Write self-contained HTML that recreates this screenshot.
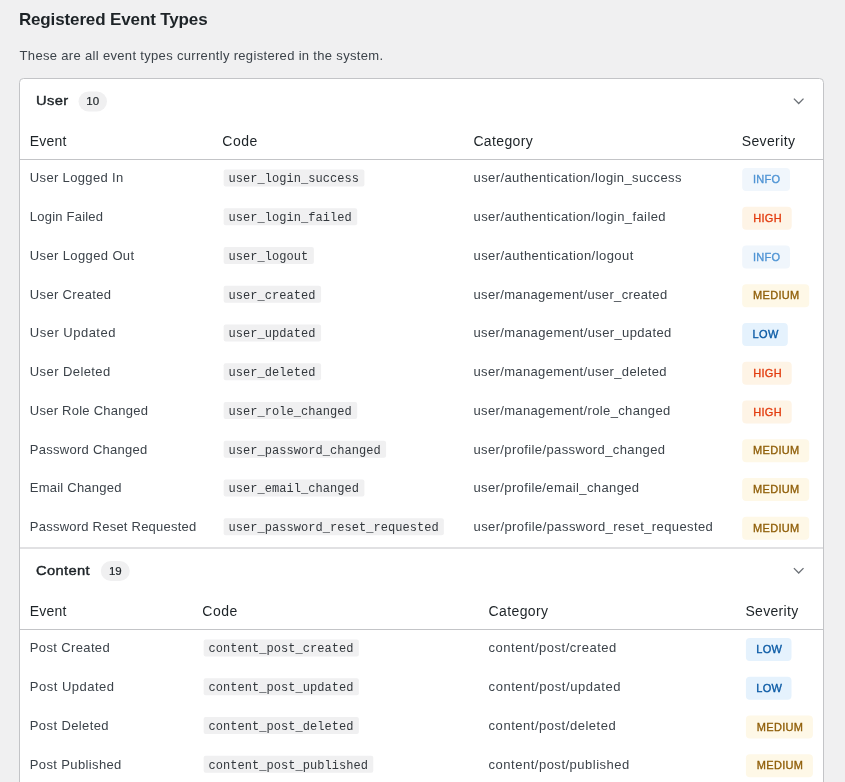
<!DOCTYPE html>
<html lang="en">
<head>
<meta charset="utf-8">
<title>Registered Event Types</title>
<style>
html,body{margin:0;padding:0;}
html{background:#f0f0f1;}
body{width:845px;height:782px;overflow:hidden;background:#f0f0f1;color:#3c434a;font-family:"Liberation Sans",sans-serif;font-size:13px;position:relative;}
h2,p,div,span,code{position:absolute;margin:0;white-space:nowrap;}
h2{left:18.9px;top:10px;font-size:17px;line-height:20px;font-weight:700;color:#1d2327;}
.desc{left:19.6px;top:48px;font-size:13px;line-height:16px;color:#3c434a;}
.st{font-size:13.5px;line-height:20px;height:20px;font-weight:400;-webkit-text-stroke:0.42px #1d2327;color:#1d2327;transform:scaleX(1.09);transform-origin:0 50%;}
.sb{height:20px;-webkit-text-stroke:0.2px #1d2327;color:#1d2327;font-size:11.5px;line-height:20px;text-align:center;}
.th{font-size:14px;line-height:20px;height:20px;color:#1d2327;}
.td{font-size:13px;line-height:20px;height:20px;color:#3c434a;}
code{font-family:"Liberation Mono",monospace;font-size:12px;line-height:18px;height:18px;color:#32373c;}
.sv{font-size:11px;font-weight:400;-webkit-text-stroke:0.35px currentColor;line-height:20px;height:20px;text-align:center;}
.info{color:#4f94d4;}
.high{color:#e23d10;}
.med{color:#8f5e08;}
.low{color:#0a5aa5;}
svg{position:absolute;}
</style>
</head>
<body>
<svg width="845" height="782" viewBox="0 0 845 782" style="left:0;top:0">
<rect x="19.5" y="78.5" width="804" height="720" rx="4" fill="#fff" stroke="#c3c4c7"/>
<rect x="78.5" y="91.50" width="28.5" height="20" rx="10" fill="#f0f0f1"/>
<path d="M793.9 98.60 L798.7 103.50 L803.5 98.60" fill="none" stroke="#6c7177" stroke-width="1.35"/>
<rect x="20" y="159.00" width="803" height="1" fill="#c3c4c7"/>
<rect x="223.65" y="169.60" width="140.76" height="17" rx="2" fill="#f0f0f1"/>
<rect x="742.20" y="168.00" width="47.8" height="22.9" rx="4" fill="#f0f6fc"/>
<rect x="223.65" y="208.35" width="133.54" height="17" rx="2" fill="#f0f0f1"/>
<rect x="742.20" y="206.75" width="49.5" height="22.9" rx="4" fill="#fef4e6"/>
<rect x="223.65" y="247.10" width="90.22" height="17" rx="2" fill="#f0f0f1"/>
<rect x="742.20" y="245.50" width="47.8" height="22.9" rx="4" fill="#f0f6fc"/>
<rect x="223.65" y="285.85" width="97.44" height="17" rx="2" fill="#f0f0f1"/>
<rect x="742.20" y="284.25" width="67.0" height="22.9" rx="4" fill="#fef8e7"/>
<rect x="223.65" y="324.60" width="97.44" height="17" rx="2" fill="#f0f0f1"/>
<rect x="742.20" y="323.00" width="45.6" height="22.9" rx="4" fill="#e5f2fd"/>
<rect x="223.65" y="363.35" width="97.44" height="17" rx="2" fill="#f0f0f1"/>
<rect x="742.20" y="361.75" width="49.5" height="22.9" rx="4" fill="#fef4e6"/>
<rect x="223.65" y="402.10" width="133.54" height="17" rx="2" fill="#f0f0f1"/>
<rect x="742.20" y="400.50" width="49.5" height="22.9" rx="4" fill="#fef4e6"/>
<rect x="223.65" y="440.85" width="162.42" height="17" rx="2" fill="#f0f0f1"/>
<rect x="742.20" y="439.25" width="67.0" height="22.9" rx="4" fill="#fef8e7"/>
<rect x="223.65" y="479.60" width="140.76" height="17" rx="2" fill="#f0f0f1"/>
<rect x="742.20" y="478.00" width="67.0" height="22.9" rx="4" fill="#fef8e7"/>
<rect x="223.65" y="518.35" width="220.18" height="17" rx="2" fill="#f0f0f1"/>
<rect x="742.20" y="516.75" width="67.0" height="22.9" rx="4" fill="#fef8e7"/>
<rect x="20" y="547.5" width="803.5" height="1" fill="#c3c4c7"/>
<rect x="100.8" y="561.00" width="29.0" height="20" rx="10" fill="#f0f0f1"/>
<path d="M793.9 568.10 L798.7 573.00 L803.5 568.10" fill="none" stroke="#6c7177" stroke-width="1.35"/>
<rect x="20" y="629.00" width="803" height="1" fill="#c3c4c7"/>
<rect x="203.65" y="639.60" width="155.20" height="17" rx="2" fill="#f0f0f1"/>
<rect x="745.90" y="638.00" width="45.6" height="22.9" rx="4" fill="#e5f2fd"/>
<rect x="203.65" y="678.35" width="155.20" height="17" rx="2" fill="#f0f0f1"/>
<rect x="745.90" y="676.75" width="45.6" height="22.9" rx="4" fill="#e5f2fd"/>
<rect x="203.65" y="717.10" width="155.20" height="17" rx="2" fill="#f0f0f1"/>
<rect x="745.90" y="715.50" width="67.0" height="22.9" rx="4" fill="#fef8e7"/>
<rect x="203.65" y="755.85" width="169.64" height="17" rx="2" fill="#f0f0f1"/>
<rect x="745.90" y="754.25" width="67.0" height="22.9" rx="4" fill="#fef8e7"/>
</svg>
<div id="tx" style="left:0;top:0;width:845px;height:782px;will-change:transform">
<h2 id="h2" style="letter-spacing:-0.131px;">Registered Event Types</h2>
<p class="desc" id="desc" style="letter-spacing:0.326px;">These are all event types currently registered in the system.</p>
<span class="st" id="at" style="left:36.0px;top:91.10px;letter-spacing:0.300px;">User</span>
<span class="sb" id="ab" style="left:78.5px;top:91.25px;width:28.5px;">10</span>
<span class="th" id="ah0" style="left:29.7px;top:131.15px;letter-spacing:0.212px;">Event</span>
<span class="th" id="ah1" style="left:222.3px;top:131.15px;letter-spacing:0.543px;">Code</span>
<span class="th" id="ah2" style="left:473.4px;top:131.15px;letter-spacing:0.357px;">Category</span>
<span class="th" id="ah3" style="left:741.7px;top:131.15px;letter-spacing:0.380px;">Severity</span>
<span class="td" id="ae0" style="left:29.8px;top:168.45px;letter-spacing:0.349px;">User Logged In</span>
<code id="ac0" style="left:228.5px;top:170.30px;letter-spacing:0.050px;">user_login_success</code>
<span class="td" id="ag0" style="left:473.5px;top:168.45px;letter-spacing:0.401px;">user/authentication/login_success</span>
<span class="sv info" id="as0" style="left:742.80px;width:47.8px;top:169.10px;letter-spacing:0.300px;">INFO</span>
<span class="td" id="ae1" style="left:29.8px;top:207.20px;letter-spacing:0.221px;">Login Failed</span>
<code id="ac1" style="left:228.5px;top:209.05px;letter-spacing:0.050px;">user_login_failed</code>
<span class="td" id="ag1" style="left:473.5px;top:207.20px;letter-spacing:0.414px;">user/authentication/login_failed</span>
<span class="sv high" id="as1" style="left:742.80px;width:49.5px;top:207.85px;letter-spacing:0.300px;">HIGH</span>
<span class="td" id="ae2" style="left:29.8px;top:245.95px;letter-spacing:0.378px;">User Logged Out</span>
<code id="ac2" style="left:228.5px;top:247.80px;letter-spacing:0.050px;">user_logout</code>
<span class="td" id="ag2" style="left:473.5px;top:245.95px;letter-spacing:0.435px;">user/authentication/logout</span>
<span class="sv info" id="as2" style="left:742.80px;width:47.8px;top:246.60px;letter-spacing:0.300px;">INFO</span>
<span class="td" id="ae3" style="left:29.8px;top:284.70px;letter-spacing:0.353px;">User Created</span>
<code id="ac3" style="left:228.5px;top:286.55px;letter-spacing:0.050px;">user_created</code>
<span class="td" id="ag3" style="left:473.5px;top:284.70px;letter-spacing:0.346px;">user/management/user_created</span>
<span class="sv med" id="as3" style="left:742.80px;width:67.0px;top:285.35px;letter-spacing:0.300px;">MEDIUM</span>
<span class="td" id="ae4" style="left:29.8px;top:323.45px;letter-spacing:0.491px;">User Updated</span>
<code id="ac4" style="left:228.5px;top:325.30px;letter-spacing:0.050px;">user_updated</code>
<span class="td" id="ag4" style="left:473.5px;top:323.45px;letter-spacing:0.364px;">user/management/user_updated</span>
<span class="sv low" id="as4" style="left:742.80px;width:45.6px;top:324.10px;letter-spacing:0.300px;">LOW</span>
<span class="td" id="ae5" style="left:29.8px;top:362.20px;letter-spacing:0.417px;">User Deleted</span>
<code id="ac5" style="left:228.5px;top:364.05px;letter-spacing:0.050px;">user_deleted</code>
<span class="td" id="ag5" style="left:473.5px;top:362.20px;letter-spacing:0.353px;">user/management/user_deleted</span>
<span class="sv high" id="as5" style="left:742.80px;width:49.5px;top:362.85px;letter-spacing:0.300px;">HIGH</span>
<span class="td" id="ae6" style="left:29.8px;top:400.95px;letter-spacing:0.248px;">User Role Changed</span>
<code id="ac6" style="left:228.5px;top:402.80px;letter-spacing:0.050px;">user_role_changed</code>
<span class="td" id="ag6" style="left:473.5px;top:400.95px;letter-spacing:0.353px;">user/management/role_changed</span>
<span class="sv high" id="as6" style="left:742.80px;width:49.5px;top:401.60px;letter-spacing:0.300px;">HIGH</span>
<span class="td" id="ae7" style="left:29.8px;top:439.70px;letter-spacing:0.266px;">Password Changed</span>
<code id="ac7" style="left:228.5px;top:441.55px;letter-spacing:0.050px;">user_password_changed</code>
<span class="td" id="ag7" style="left:473.5px;top:439.70px;letter-spacing:0.387px;">user/profile/password_changed</span>
<span class="sv med" id="as7" style="left:742.80px;width:67.0px;top:440.35px;letter-spacing:0.300px;">MEDIUM</span>
<span class="td" id="ae8" style="left:29.8px;top:478.45px;letter-spacing:0.229px;">Email Changed</span>
<code id="ac8" style="left:228.5px;top:480.30px;letter-spacing:0.050px;">user_email_changed</code>
<span class="td" id="ag8" style="left:473.5px;top:478.45px;letter-spacing:0.380px;">user/profile/email_changed</span>
<span class="sv med" id="as8" style="left:742.80px;width:67.0px;top:479.10px;letter-spacing:0.300px;">MEDIUM</span>
<span class="td" id="ae9" style="left:29.8px;top:517.20px;letter-spacing:0.232px;">Password Reset Requested</span>
<code id="ac9" style="left:228.5px;top:519.05px;letter-spacing:0.050px;">user_password_reset_requested</code>
<span class="td" id="ag9" style="left:473.5px;top:517.20px;letter-spacing:0.406px;">user/profile/password_reset_requested</span>
<span class="sv med" id="as9" style="left:742.80px;width:67.0px;top:517.85px;letter-spacing:0.300px;">MEDIUM</span>
<span class="st" id="bt" style="left:36.0px;top:560.60px;letter-spacing:0.300px;">Content</span>
<span class="sb" id="bb" style="left:100.8px;top:560.75px;width:29.0px;">19</span>
<span class="th" id="bh0" style="left:29.7px;top:601.15px;letter-spacing:0.212px;">Event</span>
<span class="th" id="bh1" style="left:202.3px;top:601.15px;letter-spacing:0.543px;">Code</span>
<span class="th" id="bh2" style="left:488.5px;top:601.15px;letter-spacing:0.390px;">Category</span>
<span class="th" id="bh3" style="left:745.4px;top:601.15px;letter-spacing:0.329px;">Severity</span>
<span class="td" id="be0" style="left:29.8px;top:638.45px;letter-spacing:0.365px;">Post Created</span>
<code id="bc0" style="left:208.5px;top:640.30px;letter-spacing:0.050px;">content_post_created</code>
<span class="td" id="bg0" style="left:488.6px;top:638.45px;letter-spacing:0.523px;">content/post/created</span>
<span class="sv low" id="bs0" style="left:746.50px;width:45.6px;top:639.10px;letter-spacing:0.300px;">LOW</span>
<span class="td" id="be1" style="left:29.8px;top:677.20px;letter-spacing:0.500px;">Post Updated</span>
<code id="bc1" style="left:208.5px;top:679.05px;letter-spacing:0.050px;">content_post_updated</code>
<span class="td" id="bg1" style="left:488.6px;top:677.20px;letter-spacing:0.549px;">content/post/updated</span>
<span class="sv low" id="bs1" style="left:746.50px;width:45.6px;top:677.85px;letter-spacing:0.300px;">LOW</span>
<span class="td" id="be2" style="left:29.8px;top:715.95px;letter-spacing:0.394px;">Post Deleted</span>
<code id="bc2" style="left:208.5px;top:717.80px;letter-spacing:0.050px;">content_post_deleted</code>
<span class="td" id="bg2" style="left:488.6px;top:715.95px;letter-spacing:0.527px;">content/post/deleted</span>
<span class="sv med" id="bs2" style="left:746.50px;width:67.0px;top:716.60px;letter-spacing:0.300px;">MEDIUM</span>
<span class="td" id="be3" style="left:29.8px;top:754.70px;letter-spacing:0.370px;">Post Published</span>
<code id="bc3" style="left:208.5px;top:756.55px;letter-spacing:0.050px;">content_post_published</code>
<span class="td" id="bg3" style="left:488.6px;top:754.70px;letter-spacing:0.506px;">content/post/published</span>
<span class="sv med" id="bs3" style="left:746.50px;width:67.0px;top:755.35px;letter-spacing:0.300px;">MEDIUM</span>
</div>
</body>
</html>
